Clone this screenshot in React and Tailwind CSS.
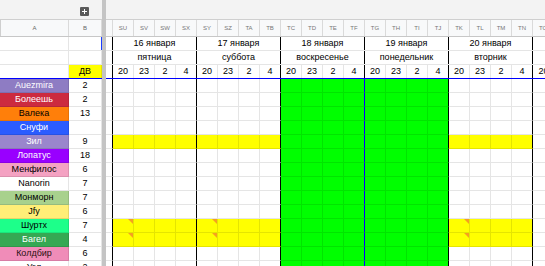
const font = { fontFamily: '"Liberation Sans", Arial, sans-serif' };

const letters = ['SU', 'SV', 'SW', 'SX', 'SY', 'SZ', 'TA', 'TB', 'TC', 'TD', 'TE', 'TF', 'TG', 'TH', 'TI', 'TJ', 'TK', 'TL', 'TM', 'TN', 'TO'];

const days = [
  { d: '16 января', w: 'пятница' },
  { d: '17 января', w: 'суббота' },
  { d: '18 января', w: 'воскресенье' },
  { d: '19 января', w: 'понедельник' },
  { d: '20 января', w: 'вторник' },
];

const hours = ['20', '23', '2', '4'];

const people = [
  { n: 'Auezmira', v: '2', bg: 'bg-[#8e7cc3]', t: 'text-white' },
  { n: 'Болеешь', v: '2', bg: 'bg-[#cc2a3f]', t: 'text-white' },
  { n: 'Валека', v: '13', bg: 'bg-[#ff7f0a]', t: 'text-black' },
  { n: 'Снуфи', v: '', bg: 'bg-[#2b5cff]', t: 'text-white' },
  { n: 'Зил', v: '9', bg: 'bg-[#9a86cc]', t: 'text-white', y: true },
  { n: 'Лопатус', v: '18', bg: 'bg-[#9900ff]', t: 'text-white' },
  { n: 'Менфилос', v: '6', bg: 'bg-[#f4a2c2]', t: 'text-black' },
  { n: 'Nanorin', v: '7', bg: 'bg-white', t: 'text-black' },
  { n: 'Монморн', v: '7', bg: 'bg-[#a8d18d]', t: 'text-black' },
  { n: 'Jfy', v: '6', bg: 'bg-[#ffee77]', t: 'text-black' },
  { n: 'Шуртх', v: '7', bg: 'bg-[#1dff8a]', t: 'text-black', y: true, m: true },
  { n: 'Багел', v: '4', bg: 'bg-[#35a853]', t: 'text-white', y: true, m: true },
  { n: 'Колдбир', v: '6', bg: 'bg-[#f08cb8]', t: 'text-[#2a1010]' },
  { n: 'Узл', v: '2', bg: 'bg-white', t: 'text-black' },
];

function Marker() {
  return (
    <span className="absolute top-0 right-0 w-0 h-0 border-l-[5px] border-l-transparent border-t-[5px] border-t-[#f5a020]" />
  );
}

function LeftPane() {
  return (
    <div className="w-[102px] shrink-0 flex flex-col">
      <div className="h-[20px] shrink-0 bg-[#f3f3f3] border-b border-b-[#cfcfcf] flex justify-end pr-[13px] pt-[7px]">
        <div className="w-[9px] h-[9px] bg-[#5a5a5a] rounded-[1px] flex items-center justify-center">
          <svg width="5" height="5" viewBox="0 0 5 5">
            <path d="M2.5 0v5M0 2.5h5" stroke="#fff" strokeWidth="1" />
          </svg>
        </div>
      </div>
      <div className="h-[17px] shrink-0 flex bg-[#f8f9fa] border-b border-b-[#c7c7c7] text-[6px] text-[#666]">
        <div className="w-[69px] border-r border-r-[#dadada] border-l border-l-[#cfcfcf] flex items-center justify-center">A</div>
        <div className="w-[33px] border-r border-r-[#dadada] flex items-center justify-center">B</div>
      </div>
      <div className="h-[14px] shrink-0 flex border-b border-b-black/10">
        <div className="w-[69px] border-r border-r-black/10" />
        <div className="w-[33px] border-r border-r-[#1a3cff]" />
      </div>
      <div className="h-[14px] shrink-0 flex border-b border-b-black/10">
        <div className="w-[69px] border-r border-r-black/10" />
        <div className="w-[33px] border-r border-r-black/10" />
      </div>
      <div className="h-[14px] shrink-0 flex border-b border-b-[#0000ff]">
        <div className="w-[69px] border-r border-r-black/10" />
        <div className="w-[33px] border-r border-r-black/10 bg-[#ffff00] flex items-center justify-center text-[9px] text-black">ДВ</div>
      </div>
      {people.map((p) => (
        <div key={p.n} className="h-[14px] shrink-0 flex text-[9px]">
          <div className={`w-[69px] border-r border-b border-black/10 flex items-center justify-center ${p.bg} ${p.t}`}>{p.n}</div>
          <div className="w-[33px] border-r border-b border-black/10 flex items-center justify-center text-black">{p.v}</div>
        </div>
      ))}
    </div>
  );
}

function RightPane() {
  return (
    <div className="flex-1 flex flex-col min-w-0">
      <div className="h-[20px] shrink-0 bg-[#f3f3f3] border-b border-b-[#cfcfcf]" />
      <div className="h-[17px] shrink-0 flex bg-[#f8f9fa] border-b border-b-[#c7c7c7] text-[6px] text-[#777]">
        <div className="w-[7px] shrink-0 border-r border-r-[#dadada]" />
        {letters.map((l) => (
          <div key={l} className="w-[21px] shrink-0 border-r border-r-[#dadada] flex items-center justify-center">{l}</div>
        ))}
      </div>
      <div className="h-[14px] shrink-0 flex border-b border-b-black/10 text-[9px] text-black">
        <div className="w-[7px] shrink-0 border-r border-r-black" />
        {days.map((d) => (
          <div key={d.d} className="w-[84px] shrink-0 border-r border-r-black flex items-center justify-center">{d.d}</div>
        ))}
        <div className="w-[21px] shrink-0" />
      </div>
      <div className="h-[14px] shrink-0 flex border-b border-b-black/10 text-[9px] text-black">
        <div className="w-[7px] shrink-0 border-r border-r-black" />
        {days.map((d) => (
          <div key={d.d} className="w-[84px] shrink-0 border-r border-r-black flex items-center justify-center">{d.w}</div>
        ))}
        <div className="w-[21px] shrink-0" />
      </div>
      <div className="h-[14px] shrink-0 flex border-b border-b-[#0000ff] text-[9px] text-black">
        <div className="w-[7px] shrink-0 border-r border-r-black" />
        {days.map((d) =>
          hours.map((h, c) => (
            <div
              key={d.d + c}
              className={`w-[21px] shrink-0 border-r flex items-center justify-center ${c === 3 ? 'border-r-black' : 'border-r-black/10'}`}
            >
              {h}
            </div>
          ))
        )}
        <div className="w-[21px] shrink-0 flex items-center justify-center">20</div>
      </div>
      {people.map((p) => (
        <div key={p.n} className="h-[14px] shrink-0 flex">
          <div className="w-[7px] shrink-0 border-r border-r-black border-b border-b-black/10" />
          {days.map((d, g) =>
            hours.map((h, c) => {
              const green = g === 2 || g === 3;
              const bg = green ? 'bg-[#00ff00]' : p.y ? 'bg-[#ffff00]' : 'bg-white';
              const right = c === 3 ? (g === 2 ? 'border-r-[#0000ff]' : 'border-r-black') : 'border-r-black/10';
              return (
                <div key={d.d + c} className={`relative w-[21px] shrink-0 border-r border-b border-b-black/10 ${right} ${bg}`}>
                  {p.m && c === 0 && !green && <Marker />}
                </div>
              );
            })
          )}
          <div className="w-[21px] shrink-0 border-r border-b border-black/10" />
        </div>
      ))}
    </div>
  );
}

export default function App() {
  return (
    <div className="w-[545px] h-[266px] overflow-hidden bg-white flex" style={font}>
      <LeftPane />
      <div className="w-[4px] shrink-0 bg-[#c4c4c4]" />
      <RightPane />
    </div>
  );
}
